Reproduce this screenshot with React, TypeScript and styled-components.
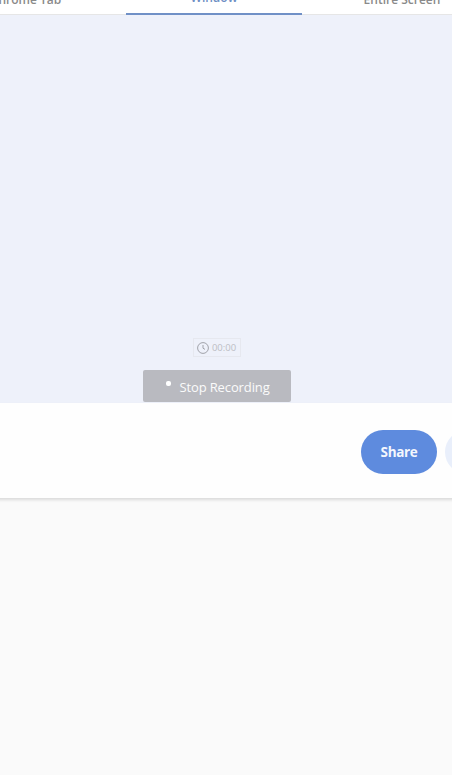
import React from "react";
import styled, { createGlobalStyle } from "styled-components";

const GlobalStyle = createGlobalStyle`
    html, body {
        margin: 0;
        height: 100%;
        overflow: hidden;
        background-color: #fafafa;
        font-family: "Open Sans", "Liberation Sans", sans-serif;
    }
`;

const Page = styled.div`
    width: 640px;
    height: 775px;
    margin-left: -62px;
    overflow: hidden;
    background-color: #fafafa;
`;

const TabBar = styled.div`
    display: grid;
    grid-template-columns: 176px 176px 176px;
    column-gap: 12px;
    height: 15px;
    box-sizing: border-box;
    background-color: #ffffff;
    border-bottom: 1px solid #e6e6e6;
`;

const Tab = styled.div<{ $active?: boolean }>`
    height: 15px;
    box-sizing: border-box;
    display: flex;
    align-items: flex-end;
    justify-content: center;
    padding-bottom: 7px;
    line-height: 16px;
    font-size: 12px;
    font-weight: 600;
    color: ${(p) => (p.$active ? "#6f8fc4" : "#8a8a8a")};
    border-bottom: ${(p) => (p.$active ? "2.5px solid #7090c6" : "none")};
`;

const Preview = styled.div`
    height: 388px;
    box-sizing: border-box;
    padding: 323px 0 1px 0;
    width: 558px;
    display: flex;
    flex-direction: column;
    align-items: center;
    background-color: #eef1fa;
`;

const Timer = styled.div`
    display: flex;
    align-items: center;
    gap: 3px;
    width: 48px;
    height: 19px;
    box-sizing: border-box;
    justify-content: center;
    padding-right: 1px;
    border: 1px solid #e6e8ef;
    font-size: 9.5px;
    color: #bcbec5;
`;

const StopButton = styled.div`
    margin-top: 13px;
    width: 148px;
    height: 32px;
    box-sizing: border-box;
    display: flex;
    align-items: center;
    justify-content: center;
    gap: 8px;
    padding: 2px 0 0 2px;
    border-radius: 2px;
    background-color: #b9bac0;
    color: #fbfbfb;
    font-size: 13px;
    letter-spacing: -0.12px;
`;

const Dot = styled.span`
    width: 5px;
    height: 5px;
    margin-top: -7px;
    border-radius: 2px;
    background-color: #ffffff;
`;

const ActionPanel = styled.div`
    height: 95px;
    box-sizing: border-box;
    display: flex;
    align-items: center;
    gap: 8px;
    padding: 3px 0 0 423px;
    background-color: #fefefe;
    box-shadow: 0 2px 3px rgba(0, 0, 0, 0.13);
`;

const PillButton = styled.div<{ $primary?: boolean }>`
    flex: none;
    width: 76px;
    height: 44px;
    border-radius: 22px;
    display: flex;
    align-items: center;
    justify-content: center;
    font-size: 13.5px;
    font-weight: 700;
    letter-spacing: -0.35px;
    color: ${(p) => (p.$primary ? "#f4f7fd" : "#5b8ae0")};
    background-color: ${(p) => (p.$primary ? "#5e8bde" : "#e9effb")};
`;

const ClockIcon = () => (
    <svg width="12" height="12" viewBox="0 0 12 12" fill="none" stroke="#a0a2a9" strokeWidth="1">
        <circle cx="6" cy="6" r="5.4" />
        <path d="M6 3v3.2l2 1.2" />
    </svg>
);

const App: React.FC = () => {
    return (
        <>
            <GlobalStyle />
            <Page>
                <TabBar>
                    <Tab>Chrome Tab</Tab>
                    <Tab $active>Window</Tab>
                    <Tab>Entire Screen</Tab>
                </TabBar>
                <Preview>
                    <Timer>
                        <ClockIcon />
                        00:00
                    </Timer>
                    <StopButton>
                        <Dot />
                        Stop Recording
                    </StopButton>
                </Preview>
                <ActionPanel>
                    <PillButton $primary>Share</PillButton>
                    <PillButton>&nbsp;</PillButton>
                </ActionPanel>
            </Page>
        </>
    );
};

export default App;
